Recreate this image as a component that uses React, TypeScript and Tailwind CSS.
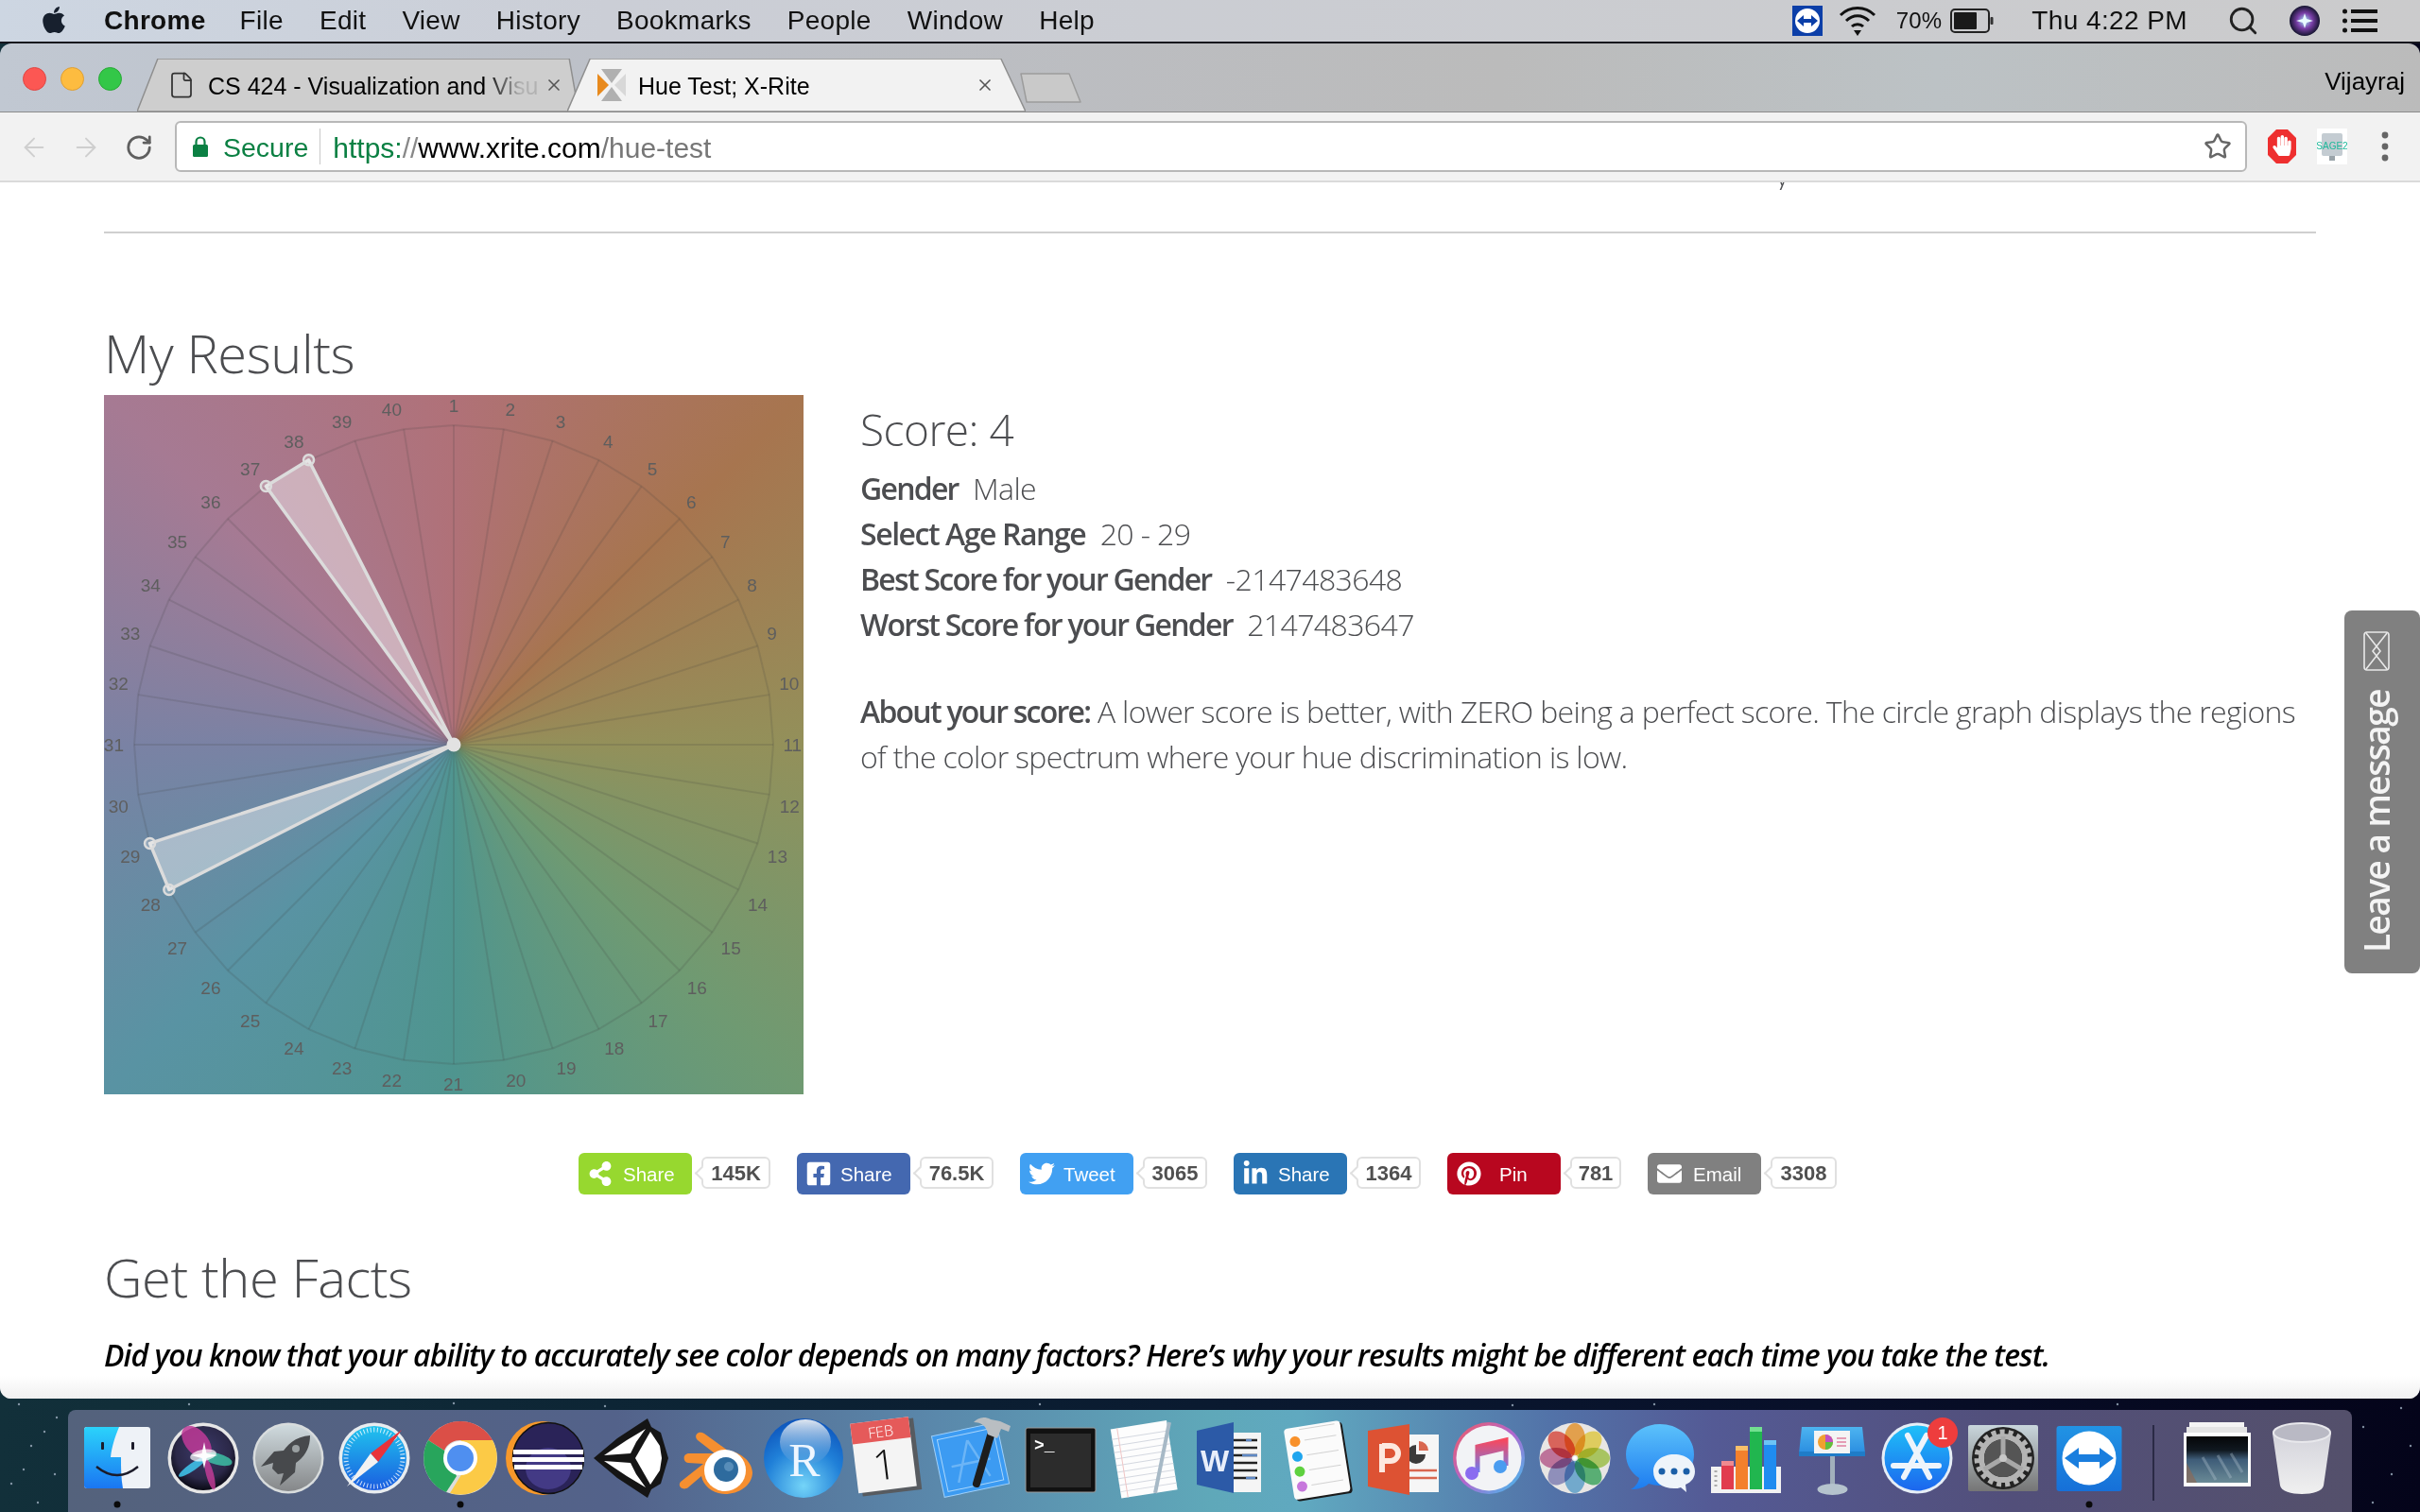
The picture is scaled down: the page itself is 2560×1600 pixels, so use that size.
import React from "react";
import { FaApple, FaFacebookSquare, FaTwitter, FaLinkedinIn, FaPinterest, FaEnvelope, FaShareAlt, FaHandPaper } from "react-icons/fa";
import { ArrowLeft, ArrowRight, RotateCw, Star, Search, X, File } from "lucide-react";

const toXY = (cx: number, cy: number, r: number, i: number) => {
  const a = ((i - 1) * 9 * Math.PI) / 180;
  return [cx + r * Math.sin(a), cy - r * Math.cos(a)];
};

const labelPos = [
  [764,58],[884,66],[991,92],[1092,135],[1186,193],[1269,263],[1341,348],[1398,440],[1440,543],[1477,650],
  [1484,779],[1478,911],[1452,1017],[1410,1120],[1353,1212],[1281,1297],[1198,1367],[1105,1425],[1003,1468],[896,1494],
  [763,1502],[632,1494],[526,1468],[424,1425],[331,1367],[247,1297],[176,1212],[119,1120],[76,1017],[51,911],
  [41,779],[51,650],[76,543],[119,440],[176,348],[247,263],[331,193],[424,135],[526,92],[632,66],
];

function Wheel() {
  const c = 370, cy = 370, R = 338;
  const nums = Array.from({ length: 40 }, (_, i) => i + 1);
  const ring = nums.map((n) => toXY(c, cy, R, n).join(",")).join(" ");
  const wedge = (a: number, b: number) => `${c},${cy} ${toXY(c, cy, R, a).join(",")} ${toXY(c, cy, R, b).join(",")}`;
  return (
    <svg width="740" height="740" viewBox="0 0 740 740" className="block">
      <g stroke="#3c3c3c" strokeOpacity="0.16" strokeWidth="2" fill="none">
        <polygon points={ring} />
        {nums.map((n) => {
          const [x, y] = toXY(c, cy, R, n);
          return <line key={n} x1={c} y1={cy} x2={x} y2={y} />;
        })}
      </g>
      <g fontFamily="'Liberation Sans', sans-serif" fontSize="19" fill="#5e5e5e" textAnchor="middle">
        {nums.map((n) => {
          const [zx, zy] = labelPos[n - 1];
          return <text key={n} x={zx / 2.01 - 10} y={zy / 2.01 - 18 + 7}>{n}</text>;
        })}
      </g>
      {[wedge(37, 38), wedge(28, 29)].map((p) => (
        <polygon key={p} points={p} fill="#ffffff" fillOpacity="0.42" stroke="#dcdcdc" strokeWidth="3.5" strokeLinejoin="round" />
      ))}
      {[37, 38, 28, 29].map((n) => {
        const [x, y] = toXY(c, cy, R, n);
        return <circle key={n} cx={x} cy={y} r="5.5" fill="#ffffff" fillOpacity="0.25" stroke="#dcdcdc" strokeWidth="2.5" />;
      })}
      <circle cx={c} cy={cy} r="7.5" fill="#e2e2e2" />
    </svg>
  );
}

const shares = [
  { label: "Share", count: "145K", bg: "bg-[#97d82f]", w: "w-[73px]", ml: "ml-[10px]", icon: <FaShareAlt size={26} /> },
  { label: "Share", count: "76.5K", bg: "bg-[#4468b0]", w: "w-[78px]", ml: "ml-[9px]", icon: <FaFacebookSquare size={28} /> },
  { label: "Tweet", count: "3065", bg: "bg-[#41a0f2]", w: "w-[68px]", ml: "ml-[9px]", icon: <FaTwitter size={28} /> },
  { label: "Share", count: "1364", bg: "bg-[#2a75b5]", w: "w-[68px]", ml: "ml-[10px]", icon: <FaLinkedinIn size={28} /> },
  { label: "Pin", count: "781", bg: "bg-[#b8071f]", w: "w-[54px]", ml: "ml-[18px]", icon: <FaPinterest size={26} /> },
  { label: "Email", count: "3308", bg: "bg-[#808080]", w: "w-[70px]", ml: "ml-[11px]", icon: <FaEnvelope size={26} /> },
];

function Tab({ active, title, icon, width, pr }: { active: boolean; title: string; icon: React.ReactNode; width: string; pr: string }) {
  return (
    <div className={`relative h-[56px] shrink-0 ${width} ${active ? "z-10 -ml-[12px]" : ""}`}>
      <svg className="absolute inset-0 h-full w-full" viewBox="0 0 100 56" preserveAspectRatio="none">
        <polygon
          points={active ? "0,56 5,0 94.6,0 100,56" : "0,56 4.7,0 97.9,0 100,56"}
          fill={active ? "#f2f2f2" : "#cecece"}
          stroke="#8f8f8f"
          strokeWidth="1.5"
          vectorEffect="non-scaling-stroke"
        />
      </svg>
      <div className={`relative flex h-full items-center pl-[32px] ${pr}`}>
        <div className="w-[30px] h-[34px] flex items-center justify-center shrink-0">{icon}</div>
        <div className={`ml-[13px] pt-[4px] flex-1 whitespace-nowrap text-[25px] text-black ${active ? "" : "[mask-image:linear-gradient(90deg,#000_82%,#00000022_93%)]"}`}>{title}</div>
        <X size={20} strokeWidth={2} className="text-[#555] shrink-0" />
      </div>
    </div>
  );
}

const DOCK_W = 90;
function Ic({ children, dot }: { children: React.ReactNode; dot?: boolean }) {
  return (
    <svg width={DOCK_W} height="108" viewBox="0 0 90 108" className="block shrink-0 overflow-visible mr-[0.7px]">
      {children}
      {dot && <ellipse cx="45" cy="100" rx="3.5" ry="3.5" fill="#0a0a0a" />}
    </svg>
  );
}
const F = "'Liberation Sans', sans-serif";

function Dock() {
  return (
    <div className="flex items-start">
      <Ic dot>
        <defs><linearGradient id="fb" x1="0" y1="0" x2="0" y2="1"><stop offset="0" stopColor="#2bd3fb" /><stop offset="1" stopColor="#1a76f2" /></linearGradient></defs>
        <rect x="10" y="18" width="70" height="65" rx="3" fill="#eef2f7" />
        <path d="M13 18H47C42 30 39 40 38 50H49C49 62 49 72 51 83H13a3 3 0 0 1-3-3V21a3 3 0 0 1 3-3z" fill="url(#fb)" />
        <rect x="28" y="34" width="3" height="8" rx="1" fill="#1b1b2a" /><rect x="60" y="34" width="3" height="8" rx="1" fill="#1b1b2a" />
        <path d="M23 60Q45 78 67 60" fill="none" stroke="#1b1b2a" strokeWidth="2.4" />
      </Ic>
      <Ic>
        <defs><radialGradient id="sb" cx="0.5" cy="0.4" r="0.6"><stop offset="0" stopColor="#3b3a6a" /><stop offset="0.7" stopColor="#2b2848" /><stop offset="1" stopColor="#0a0a14" /></radialGradient></defs>
        <circle cx="45" cy="51" r="37.5" fill="#e6e6e6" /><circle cx="45" cy="51" r="34" fill="url(#sb)" />
        <ellipse cx="38" cy="34" rx="20" ry="12" fill="#c03a98" fillOpacity="0.85" transform="rotate(50 38 34)" />
        <ellipse cx="60" cy="52" rx="16" ry="6" fill="#3fd3b0" fillOpacity="0.75" transform="rotate(15 60 52)" />
        <ellipse cx="52" cy="68" rx="17" ry="4" fill="#d43fa0" fillOpacity="0.75" transform="rotate(75 52 68)" />
        <ellipse cx="34" cy="60" rx="18" ry="4" fill="#40c8f0" fillOpacity="0.85" transform="rotate(-35 34 60)" />
        <ellipse cx="45" cy="48" rx="14" ry="6" fill="#ffffff" fillOpacity="0.7" transform="rotate(-10 45 48)" />
        <path d="M46 34L48.5 46L60 48L48.5 51L46 62L43.5 51L32 48L43.5 46z" fill="#ffffff" fillOpacity="0.95" />
      </Ic>
      <Ic>
        <defs><linearGradient id="rk" x1="0" y1="0" x2="0" y2="1"><stop offset="0" stopColor="#cfdade" /><stop offset="1" stopColor="#858789" /></linearGradient></defs>
        <circle cx="45" cy="51" r="37.5" fill="#d8dcdd" /><circle cx="45" cy="51" r="35" fill="url(#rk)" />
        <path d="M68 27C56 28 47 33 40 43L30 44L16 60L29 56L28 62L34 68L40 67L36 80L52 66L53 56C63 49 68 40 68 27z" fill="#47494c" />
        <circle cx="53" cy="41" r="4" fill="#9aa0a2" />
      </Ic>
      <Ic>
        <defs><linearGradient id="sf" x1="0" y1="0" x2="0" y2="1"><stop offset="0" stopColor="#20c4ee" /><stop offset="1" stopColor="#1a5ce0" /></linearGradient></defs>
        <circle cx="45" cy="51" r="37.5" fill="#e8ecef" /><circle cx="45" cy="51" r="34" fill="url(#sf)" />
        <circle cx="45" cy="51" r="30" fill="none" stroke="#fff" strokeOpacity="0.8" strokeWidth="5" strokeDasharray="1 2.6" />
        <polygon points="74,21 41,46 49,55" fill="#e8333a" />
        <polygon points="16,81 41,46 49,55" fill="#f2f2f2" />
      </Ic>
      <Ic dot>
        <circle cx="45" cy="51" r="39" fill="#ddd" />
        <path d="M11 32A39 39 0 0 1 79 32L45 32C37 32 31 36 28 43L11 32z" fill="#db4f47" />
        <path d="M11 32L28 43L41 70L30 87A39 39 0 0 1 11 32z" fill="#28a55c" />
        <path d="M79 32A39 39 0 0 1 34 88L50 62L56 40L45 32z" fill="#fcca46" />
        <circle cx="45" cy="51" r="18" fill="#fff" /><circle cx="45" cy="51" r="14" fill="#4f8ff0" />
      </Ic>
      <Ic>
        <circle cx="42" cy="51" r="39" fill="#f7982a" />
        <circle cx="48" cy="51" r="37.5" fill="#2a2358" stroke="#111" strokeWidth="1.5" />
        <ellipse cx="48" cy="62" rx="24" ry="22" fill="#433a85" />
        <rect x="11" y="42" width="74" height="5" fill="#fff" /><rect x="10" y="50" width="76" height="5" fill="#fff" /><rect x="12" y="58" width="72" height="5" fill="#fff" />
      </Ic>
      <Ic>
        <polygon points="5,51 30,30 62,9 66,18 76,24 84,51 76,78 66,84 62,93 30,72" fill="#151515" />
        <polygon points="16,48 40,32 60,20 50,34 44,46" fill="#fff" />
        <polygon points="16,54 44,56 50,68 60,82 40,70" fill="#fff" />
        <polygon points="65,23 75,38 77,51 75,64 65,79 49,51" fill="#fff" />
      </Ic>
      <Ic>
        <path d="M6 76L30 57L14 56C8 55 8 46 15 46L42 46L24 32C19 27 25 21 31 25L56 43C66 44 81 52 82 66C82 80 67 89 53 89C41 89 30 81 28 70L14 82C9 86 2 81 6 76z" fill="#f68f30" />
        <circle cx="53" cy="64" r="22" fill="#fff" /><circle cx="54" cy="63" r="13" fill="#2e6b9e" /><circle cx="57" cy="60" r="5" fill="#7fb0d3" fillOpacity="0.5" />
      </Ic>
      <Ic>
        <defs>
          <radialGradient id="rb" cx="0.5" cy="0.85" r="0.9"><stop offset="0" stopColor="#74d4f8" /><stop offset="0.55" stopColor="#2080d8" /><stop offset="1" stopColor="#0a4eb8" /></radialGradient>
          <linearGradient id="rh" x1="0" y1="0" x2="0" y2="1"><stop offset="0" stopColor="#dfe6f0" /><stop offset="1" stopColor="#5a9ad8" stopOpacity="0.2" /></linearGradient>
        </defs>
        <ellipse cx="45" cy="51" rx="42" ry="42" fill="url(#rb)" />
        <ellipse cx="47" cy="34" rx="27" ry="24" fill="url(#rh)" />
        <text x="46" y="70" fontFamily="'Liberation Serif', serif" fontSize="50" fill="#eef6ff" textAnchor="middle">R</text>
      </Ic>
      <Ic>
        <g transform="rotate(-7 45 51)">
          <rect x="13" y="12" width="63" height="76" fill="#575b60" />
          <rect x="9" y="10" width="62" height="74" fill="#f4f4f4" />
          <rect x="9" y="10" width="62" height="22" fill="#e55a5a" />
          <text x="40" y="28" fontFamily="'Open Sans', sans-serif" fontWeight="300" fontSize="16" fill="#fff" textAnchor="middle">FEB</text>
          <text x="40" y="73" fontFamily="'Open Sans', sans-serif" fontWeight="300" fontSize="44" fill="#111" textAnchor="middle">1</text>
        </g>
      </Ic>
      <Ic>
        <g transform="rotate(-12 40 55)">
          <rect x="6" y="20" width="70" height="66" fill="#3c9bf2" stroke="#9fd0fa" strokeWidth="1" />
          <path d="M24 74L42 32M42 32L58 74M20 56H62" stroke="#8cc6f8" strokeOpacity="0.6" strokeWidth="2.5" fill="none" />
          <rect x="11" y="25" width="60" height="56" fill="none" stroke="#a9d6fb" strokeWidth="1" />
        </g>
        <path d="M62 27L47 78" stroke="#1d1d1d" strokeWidth="8" strokeLinecap="round" />
        <path d="M62 10C54 6 48 9 44 13C52 13 58 17 59 26L69 30L73 20L81 23L83 17L72 12z" fill="#b9bec2" />
      </Ic>
      <Ic>
        <rect x="8" y="19" width="74" height="68" rx="2" fill="#111" stroke="#9b9b9b" strokeWidth="1" />
        <rect x="13" y="25" width="64" height="57" fill="#2c2c2c" />
        <text x="17" y="43" fontFamily="'Liberation Mono', monospace" fontWeight="700" fontSize="18" fill="#fff">&gt;_</text>
      </Ic>
      <Ic>
        <g transform="rotate(-9 45 51)">
          <rect x="13" y="15" width="60" height="74" fill="#fdfdfd" />
          <path d="M13 26H73M13 33H73M13 40H73M13 47H73M13 54H73M13 61H73M13 68H73M13 75H73M13 82H73" stroke="#d4d8e0" strokeWidth="1" />
          <path d="M20 15V89" stroke="#f0c6c6" strokeWidth="1" />
        </g>
        <path d="M70 13L55 88" stroke="#a7b9c6" strokeWidth="4" />
      </Ic>
      <Ic>
        <rect x="44" y="24" width="32" height="63" fill="#f5f5f5" />
        <path d="M46 32H72M46 40H72M46 48H72M46 56H72M46 64H72M46 72H72" stroke="#222" strokeWidth="2.6" />
        <path d="M60 32H66M56 48H72M60 72H70" stroke="#5f88c4" strokeWidth="2.6" />
        <polygon points="8,22 47,13 47,88 8,79" fill="#2c5aa7" />
        <text x="27" y="65" fontFamily={F} fontSize="32" fontWeight="700" fill="#e8eefa" textAnchor="middle">W</text>
      </Ic>
      <Ic>
        <g transform="rotate(-9 45 51)">
          <rect x="14" y="15" width="60" height="76" rx="4" fill="#1a1a1a" transform="translate(2 2)" />
          <rect x="14" y="15" width="60" height="76" rx="4" fill="#fbfbfb" />
          <circle cx="24" cy="30" r="5.5" fill="#f8912b" /><circle cx="24" cy="46" r="5.5" fill="#1fa5ee" /><circle cx="24" cy="62" r="5.5" fill="#5fd13f" /><circle cx="24" cy="78" r="5.5" fill="#c778dc" />
          <path d="M34 30H68M34 46H68M34 62H68M34 78H68M30 18H68" stroke="#d2d2d2" strokeWidth="1" />
        </g>
      </Ic>
      <Ic>
        <rect x="50" y="26" width="33" height="61" fill="#f6f6f6" />
        <path d="M59 37a10 10 0 1 0 10 10H59z" fill="#3b3b3b" /><path d="M62 33a10 10 0 0 1 10 10H62z" fill="#d96750" />
        <path d="M52 64H81M52 72H81" stroke="#d96750" strokeWidth="2.5" />
        <polygon points="8,22 52,15 52,90 8,81" fill="#dd5233" />
        <path d="M23 36V66M23 38H32a8 8 0 0 1 0 16H23" fill="none" stroke="#fde8df" strokeWidth="6" />
      </Ic>
      <Ic>
        <defs>
          <linearGradient id="it" x1="0" y1="0" x2="1" y2="1"><stop offset="0" stopColor="#f25a5f" /><stop offset="0.5" stopColor="#b067d0" /><stop offset="1" stopColor="#36c6f0" /></linearGradient>
          <linearGradient id="nt" x1="0" y1="0" x2="0" y2="1"><stop offset="0" stopColor="#f6495f" /><stop offset="1" stopColor="#6c7df0" /></linearGradient>
        </defs>
        <circle cx="45" cy="51" r="38" fill="url(#it)" /><circle cx="45" cy="51" r="34.5" fill="#f2f3f6" />
        <path d="M33 39V66M63 32V59M33 39L63 32V40L33 47z" stroke="url(#nt)" strokeWidth="5" fill="url(#nt)" />
        <circle cx="27" cy="67" r="7" fill="#8a6cf0" /><circle cx="57" cy="60" r="7" fill="#4a9cf0" />
      </Ic>
      <Ic>
        <circle cx="45" cy="51" r="37.5" fill="#e8e6e4" />
        {["#f9b256", "#f6e36a", "#b9da6c", "#62c182", "#7dbce4", "#9d9fd0", "#d07fac", "#ee6f66"].map((col, i) => (
          <ellipse key={col} cx="45" cy="31" rx="11" ry="17" fill={col} className="mix-blend-multiply" transform={`rotate(${i * 45} 45 51)`} />
        ))}
        <circle cx="45" cy="51" r="2" fill="#fff" />
      </Ic>
      <Ic>
        <defs><linearGradient id="ms" x1="0" y1="0" x2="0" y2="1"><stop offset="0" stopColor="#5cc2fb" /><stop offset="1" stopColor="#1d7cf0" /></linearGradient></defs>
        <path d="M45 15C25 15 9 29 9 47C9 58 15 67 23 72C22 78 18 82 14 84C22 84 29 82 33 78C37 79 41 80 45 80C65 80 81 65 81 47C81 29 65 15 45 15z" fill="url(#ms)" />
        <path d="M60 47C47 47 38 55 38 65C38 76 47 83 60 83C62 83 65 83 67 82L73 87L72 79C79 76 82 71 82 65C82 55 73 47 60 47z" fill="#eef4fa" />
        <circle cx="47" cy="65" r="3.5" fill="#1a5fa8" /><circle cx="60" cy="65" r="3.5" fill="#1a5fa8" /><circle cx="73" cy="65" r="3.5" fill="#1a5fa8" />
      </Ic>
      <Ic>
        <rect x="8" y="60" width="74" height="28" fill="#f2f2f2" />
        <path d="M13 64v20" stroke="#aaa" strokeWidth="3" strokeDasharray="2 3" />
        <rect x="19" y="54" width="13" height="30" fill="#e13c4e" /><rect x="19" y="54" width="13" height="5" fill="#ef8a90" />
        <rect x="34" y="38" width="13" height="46" fill="#f4802c" /><rect x="34" y="38" width="13" height="5" fill="#f8c06a" />
        <rect x="49" y="18" width="13" height="66" fill="#21b64f" /><rect x="49" y="18" width="13" height="5" fill="#72e090" />
        <rect x="64" y="32" width="13" height="52" fill="#1f8cf0" /><rect x="64" y="32" width="13" height="5" fill="#6cc4f6" />
      </Ic>
      <Ic>
        <defs><linearGradient id="kn" x1="0" y1="0" x2="0" y2="1"><stop offset="0" stopColor="#4db4f0" /><stop offset="1" stopColor="#2a8de0" /></linearGradient></defs>
        <polygon points="13,18 77,18 80,46 10,46" fill="url(#kn)" />
        <rect x="10" y="44" width="70" height="5" fill="#1f7cc8" />
        <rect x="26" y="22" width="38" height="24" fill="#f4f4f4" />
        <circle cx="38" cy="34" r="8" fill="#f0a030" /><path d="M38 34V26A8 8 0 0 1 46 34z" fill="#c050c0" /><path d="M38 34H46A8 8 0 0 1 38 42z" fill="#60c040" />
        <path d="M50 30H60M50 34H60M50 38H60" stroke="#e080a0" strokeWidth="1.5" />
        <rect x="43" y="49" width="5" height="34" fill="#a2b0bc" />
        <ellipse cx="45.5" cy="84" rx="16" ry="6" fill="#b5c3cd" />
      </Ic>
      <Ic>
        <defs><linearGradient id="as" x1="0" y1="0" x2="0" y2="1"><stop offset="0" stopColor="#1fc0f8" /><stop offset="1" stopColor="#1c66ee" /></linearGradient></defs>
        <circle cx="45" cy="51" r="37.5" fill="#e6eef6" /><circle cx="45" cy="51" r="34.5" fill="url(#as)" />
        <path d="M55 27L31 71M35 27L58 71M20 59H68" stroke="#eef4fb" strokeWidth="6" strokeLinecap="round" fill="none" />
        <circle cx="72" cy="24" r="16" fill="#ee3d3d" />
        <text x="72" y="31" fontFamily={F} fontSize="20" fill="#fff" textAnchor="middle">1</text>
      </Ic>
      <Ic>
        <defs><linearGradient id="pr" x1="0" y1="0" x2="0" y2="1"><stop offset="0" stopColor="#c9d6dc" /><stop offset="1" stopColor="#757575" /></linearGradient></defs>
        <rect x="8" y="16" width="74" height="70" rx="2" fill="url(#pr)" />
        <circle cx="45" cy="51" r="33" fill="#242424" />
        <circle cx="45" cy="51" r="23" fill="none" stroke="#b4b4b4" strokeWidth="6" />
        <circle cx="45" cy="51" r="27.5" fill="none" stroke="#b4b4b4" strokeWidth="6" strokeDasharray="5 4" />
        <circle cx="45" cy="51" r="20" fill="#555" />
        <path d="M45 51V28M45 51L25 63M45 51L65 63" stroke="#a8a8a8" strokeWidth="5" />
        <circle cx="45" cy="51" r="4" fill="#c8c8c8" />
      </Ic>
      <Ic dot>
        <defs><linearGradient id="tv" x1="0" y1="0" x2="0" y2="1"><stop offset="0" stopColor="#2193e4" /><stop offset="1" stopColor="#1670d8" /></linearGradient></defs>
        <rect x="10.5" y="17" width="69" height="69" rx="3" fill="url(#tv)" />
        <circle cx="45" cy="51" r="28.5" fill="#fff" />
        <path d="M19 51L34 40V47H56V40L71 51L56 62V55H34V62z" fill="#1a7ede" />
      </Ic>
      <div className="w-[44px] h-[108px] flex justify-center shrink-0 pt-[16px]"><div className="w-[2px] h-[80px] bg-[#2a2a45]" /></div>
      <Ic>
        <rect x="16" y="13" width="58" height="6" fill="#f4f4f4" /><rect x="13" y="18" width="64" height="6" fill="#e4e4e4" />
        <rect x="10" y="24" width="71" height="57" fill="#fdfdfd" />
        <defs><linearGradient id="fd" x1="0" y1="0" x2="0" y2="1"><stop offset="0" stopColor="#050608" /><stop offset="0.3" stopColor="#101820" /><stop offset="0.5" stopColor="#3e5c78" /><stop offset="1" stopColor="#6a8a96" /></linearGradient></defs>
        <rect x="13" y="28" width="65" height="49" fill="url(#fd)" />
        <path d="M13 56L24 77H13z" fill="#8a6a58" fillOpacity="0.7" />
        <path d="M30 50L44 74M46 48L60 72M60 46L72 66" stroke="#b4c6d0" strokeOpacity="0.35" strokeWidth="3" />
      </Ic>
      <Ic>
        <defs><linearGradient id="tr" x1="0" y1="0" x2="0" y2="1"><stop offset="0" stopColor="#cfcfd8" /><stop offset="1" stopColor="#f0f0f0" /></linearGradient></defs>
        <path d="M14 25C14 12 76 12 76 25L68 80C66 92 24 92 22 80z" fill="url(#tr)" />
        <ellipse cx="45" cy="24" rx="30" ry="10" fill="#b9b9c4" stroke="#e8e8ec" strokeWidth="2" />
      </Ic>
    </div>
  );
}

const stars = [[20,1486],[60,1500],[33,1530],[12,1570],[58,1560],[40,1590],[47,1515],[25,1555],[200,1486],[480,1485],[640,1488],[1100,1486],[1600,1487],[1750,1486],[2240,1486],[2500,1510],[2530,1560],[2510,1590],[2540,1490],[2550,1530]];

export default function App() {
  return (
    <div className="relative w-[2560px] h-[1600px] overflow-hidden flex flex-col font-['Liberation_Sans',sans-serif] bg-[linear-gradient(90deg,#12303a,#0c2334_30%,#0a1a30_50%,#08102a_75%,#04041a)]">
      <svg className="absolute inset-0" width="2560" height="1600">
        {stars.map(([x, y]) => <circle key={`${x}-${y}`} cx={x} cy={y} r="1.2" fill="#9fb0c0" fillOpacity="0.8" />)}
      </svg>

      <div className="relative h-[44px] shrink-0 flex items-center bg-[linear-gradient(90deg,#cdd6e2,#cbced6_25%,#cbcbcc)] text-[28px] text-[#111] pl-[41px]">
        <FaApple size={32} className="text-[#17202e] -mt-[2px]" />
        <div className="ml-[37px] flex gap-[38px] tracking-[0.3px]">
          <span className="font-bold -mr-[2px]">Chrome</span>
          <span>File</span><span>Edit</span><span>View</span><span>History</span><span>Bookmarks</span><span>People</span><span>Window</span><span>Help</span>
        </div>
        <div className="ml-auto flex items-center pr-[45px]">
          <svg width="32" height="32" viewBox="0 0 32 32"><rect width="32" height="32" fill="#0c3fa8" /><circle cx="16" cy="16" r="13" fill="#fff" /><path d="M5 16L12 10V14H20V10L27 16L20 22V18H12V22z" fill="#0c3fa8" /></svg>
          <svg width="42" height="34" viewBox="0 0 42 34" className="ml-[16px]" fill="none" stroke="#111" strokeWidth="3"><path d="M3 11C13 1 29 1 39 11M9 17C16 10 26 10 33 17M15 23C18 20 24 20 27 23" /><path d="M21 33L17 27H25z" fill="#111" stroke="none" /></svg>
          <span className="ml-[20px] text-[24px] tracking-[0.2px]">70%</span>
          <svg width="46" height="26" viewBox="0 0 46 26" className="ml-[9px]"><rect x="1" y="1" width="40" height="24" rx="4" fill="none" stroke="#222" strokeWidth="2" /><rect x="4" y="4" width="24" height="18" rx="1" fill="#1a1a1a" /><rect x="42.5" y="9" width="3" height="8" rx="1" fill="#333" /></svg>
          <span className="ml-[40px] tracking-[0.4px]">Thu 4:22 PM</span>
          <Search size={34} strokeWidth={2} className="ml-[42px] text-[#222]" />
          <svg width="32" height="32" viewBox="0 0 32 32" className="ml-[32px]"><defs><radialGradient id="ms2"><stop offset="0" stopColor="#9fe8f8" /><stop offset="0.5" stopColor="#7a3fa8" /><stop offset="1" stopColor="#151530" /></radialGradient></defs><circle cx="16" cy="16" r="16" fill="url(#ms2)" /><path d="M16 8L18 14L25 16L18 18L16 24L14 18L7 16L14 14z" fill="#e8fbff" /></svg>
          <svg width="37" height="26" viewBox="0 0 37 26" className="ml-[24px]" fill="#111"><circle cx="2.5" cy="3" r="2.5" /><circle cx="2.5" cy="13" r="2.5" /><circle cx="2.5" cy="23" r="2.5" /><rect x="9" y="1" width="28" height="4" /><rect x="9" y="11" width="28" height="4" /><rect x="9" y="21" width="28" height="4" /></svg>
        </div>
      </div>
      <div className="relative h-[2px] shrink-0 bg-[#14141c]" />

      <div className="relative h-[1434px] shrink-0 flex flex-col rounded-[12px] overflow-hidden">
        <div className="h-[73px] shrink-0 flex items-end border-b border-[#8c8c8c] bg-[linear-gradient(90deg,#c1c8d2,#bcbfc6_30%,#bbbbbb_62%,#bcc2c5_80%,#bbbbbb)]">
          <div className="w-[145px] h-[56px] shrink-0 flex items-start gap-[15px] pl-[24px] pt-[9px]">
            <div className="w-[25px] h-[25px] rounded-full bg-[#fc5753] border border-[#df4744]" />
            <div className="w-[25px] h-[25px] rounded-full bg-[#fdbc40] border border-[#de9f34]" />
            <div className="w-[25px] h-[25px] rounded-full bg-[#33c748] border border-[#27aa35]" />
          </div>
          <Tab active={false} width="w-[467px]" pr="pr-[16px]" title="CS 424 - Visualization and Visu" icon={<File size={30} strokeWidth={1.4} className="text-[#333]" />} />
          <Tab active width="w-[485px]" pr="pr-[33px]" title="Hue Test; X-Rite" icon={
            <svg width="30" height="34" viewBox="0 0 30 34"><polygon points="4,0 26,0 15,15" fill="#b0b0b0" /><polygon points="4,34 26,34 15,19" fill="#b0b0b0" /><polygon points="0,5 0,29 12,17" fill="#e88a1e" /><polygon points="30,5 30,29 18,17" fill="#d8d8d8" /></svg>
          } />
          <svg width="66" height="32" viewBox="0 0 66 32" className="mb-[9px] -ml-[6px] shrink-0"><polygon points="1,1 52,1 64,31 7,31" fill="#c9c9c9" stroke="#9c9c9c" strokeWidth="1.5" strokeLinejoin="round" /></svg>
          <div className="ml-auto self-center pr-[16px] pt-[8px] text-[26px] text-black">Vijayraj</div>
        </div>

        <div className="h-[74px] shrink-0 flex items-center bg-[#f2f2f2] border-b-2 border-[#dadada]">
          <ArrowLeft size={32} strokeWidth={1.5} className="ml-[20px] mt-[2px] text-[#cfcfcf]" />
          <ArrowRight size={32} strokeWidth={1.5} className="ml-[23px] mt-[2px] text-[#cfcfcf]" />
          <RotateCw size={30} strokeWidth={2.2} className="ml-[25px] mt-[2px] text-[#5f5f5f]" />
          <div className="ml-[23px] w-[2192px] h-[54px] flex items-center bg-white border-2 border-[#b8b8b8] rounded-[6px]">
            <svg width="16" height="22" viewBox="0 0 16 22" className="ml-[17px]"><rect y="9" width="16" height="13" rx="1.5" fill="#0b8043" /><path d="M3.5 9V6a4.5 4.5 0 0 1 9 0v3" fill="none" stroke="#0b8043" strokeWidth="2.2" /></svg>
            <span className="ml-[16px] pt-[3px] text-[28.5px] text-[#0b8043]">Secure</span>
            <div className="ml-[12px] w-px h-[38px] bg-[#c8c8c8]" />
            <span className="ml-[13px] pt-[3px] text-[30px] whitespace-nowrap"><span className="text-[#0b8043]">https:</span><span className="text-[#888]">//</span><span className="text-black">www.xrite.com</span><span className="text-[#777]">/hue-test</span></span>
            <Star size={30} strokeWidth={2} className="ml-auto mr-[14px] text-[#666]" />
          </div>
          <svg width="32" height="38" viewBox="0 0 32 38" className="ml-[21px]"><polygon points="10,1 22,1 31,10 31,28 22,37 10,37 1,28 1,10" fill="#ee2f2f" /><foreignObject x="5" y="7" width="22" height="24"><FaHandPaper size={22} color="#fff" /></foreignObject></svg>
          <svg width="32" height="38" viewBox="0 0 32 38" className="ml-[21px]"><rect width="32" height="38" fill="#fff" /><rect x="5" y="5" width="22" height="24" rx="2" fill="#c4ccd2" /><rect x="13" y="29" width="6" height="5" fill="#9aa4aa" /><text x="16" y="22" fontFamily={F} fontSize="10" fill="#1fb89a" textAnchor="middle">SAGE2</text></svg>
          <svg width="8" height="34" viewBox="0 0 8 34" className="ml-[36px]" fill="#666"><circle cx="4" cy="5" r="3.4" /><circle cx="4" cy="17" r="3.4" /><circle cx="4" cy="29" r="3.4" /></svg>
        </div>

        <div className="relative flex-1 overflow-hidden bg-white px-[110px] font-['Open_Sans',sans-serif] font-light text-[#4c4d50]">
          <div className="h-[8px] overflow-hidden pl-[1768px] text-[32px] leading-[8px]"><span className="relative block -mt-[24px] leading-[32px]">y</span></div>
          <div className="mt-[44px] h-[2px] bg-[#cfcfcf]" />
          <h1 className="mt-[91px] h-[80px] text-[56px] leading-[70px] tracking-[-0.4px]">My Results</h1>
          <div className="flex items-start gap-[60px]">
            <div className="w-[740px] h-[740px] shrink-0 bg-[conic-gradient(from_0deg_at_50%_50%,#b07178,#a7754f_45deg,#93905a_90deg,#6f9a72_135deg,#4f958f_180deg,#5993a3_225deg,#7a82a4_270deg,#a67a93_315deg,#b07178)]">
              <Wheel />
            </div>
            <div className="flex-1 pt-[8px]">
              <div className="text-[46px] leading-[56px] tracking-[-0.5px]">Score: 4</div>
              <div className="mt-[11px] text-[32px] leading-[48px] tracking-[-0.6px]">
                <div><b className="font-semibold tracking-[-1.75px]">Gender</b>&nbsp; Male</div>
                <div><b className="font-semibold tracking-[-1.45px]">Select Age Range</b>&nbsp; 20 - 29</div>
                <div><b className="font-semibold tracking-[-1.72px]">Best Score for your Gender</b>&nbsp; -2147483648</div>
                <div><b className="font-semibold tracking-[-1.72px]">Worst Score for your Gender</b>&nbsp; 2147483647</div>
              </div>
              <p className="mt-[44px] text-[32px] leading-[48px] tracking-[-0.68px]"><b className="font-semibold tracking-[-1.75px]">About your score:</b> A lower score is better, with ZERO being a perfect score. The circle graph displays the regions of the color spectrum where your hue discrimination is low.</p>
            </div>
          </div>
          <div className="mt-[62px] flex pl-[502px] gap-[28px] font-['Liberation_Sans',sans-serif] font-normal">
            {shares.map((s) => (
              <div key={s.count} className="flex items-start gap-[10px]">
                <div className={`w-[120px] h-[44px] flex items-center rounded-[6px] text-white text-[20.5px] pl-[9px] ${s.bg}`}>
                  <span className="w-[28px] flex justify-center">{s.icon}</span><span className={`pt-[2px] ${s.ml}`}>{s.label}</span>
                </div>
                <div className={`relative h-[34px] mt-[4px] flex items-center justify-center rounded-[6px] border-2 border-[#e0e0e0] text-[22px] font-bold text-[#505050] ${s.w}`}>
                  <div className="absolute -left-[7px] top-[10px] w-[11px] h-[11px] rotate-45 bg-white border-l-2 border-b-2 border-[#e0e0e0]" />
                  <span className="relative">{s.count}</span>
                </div>
              </div>
            ))}
          </div>
          <h2 className="mt-[48px] text-[56px] leading-[78px] tracking-[-0.4px]">Get the Facts</h2>
          <p className="mt-[20px] text-[32px] leading-[48px] font-semibold italic text-black tracking-[-0.95px] whitespace-nowrap">Did you know that your ability to accurately see color depends on many factors? Here’s why your results might be different each time you take the test.</p>
          <div className="absolute left-0 right-0 bottom-0 h-[24px] bg-[linear-gradient(180deg,rgba(240,240,240,0),#f0f0f0)]" />
          <div className="absolute right-0 top-[453px] w-[80px] h-[384px] bg-[#808080] rounded-[8px] flex flex-col items-center pt-[22px] pr-[12px]">
            <svg width="28" height="42" viewBox="0 0 28 42" fill="none" stroke="#e8e8e8" strokeWidth="1.6"><rect x="1" y="1" width="26" height="40" rx="3" /><path d="M3 2L18 21L3 40M25 2L10 21L25 40" /></svg>
            <div className="mt-[20px] [writing-mode:vertical-rl] rotate-180 text-[37px] leading-[42px] tracking-[-1.5px] text-[#f4f4f4] font-semibold whitespace-nowrap">Leave a message</div>
          </div>
        </div>
      </div>

      <div className="relative mt-[12px] mx-[72px] h-[108px] shrink-0 rounded-t-[8px] pl-[7px] bg-[linear-gradient(90deg,#54627c,#53628a_24%,#5a88ab_38%,#5fa8b9_50%,#60a9c0_54%,#5272a8_65%,#545a95_72%,#524f7a_85%,#54506b)]">
        <Dock />
      </div>
    </div>
  );
}
